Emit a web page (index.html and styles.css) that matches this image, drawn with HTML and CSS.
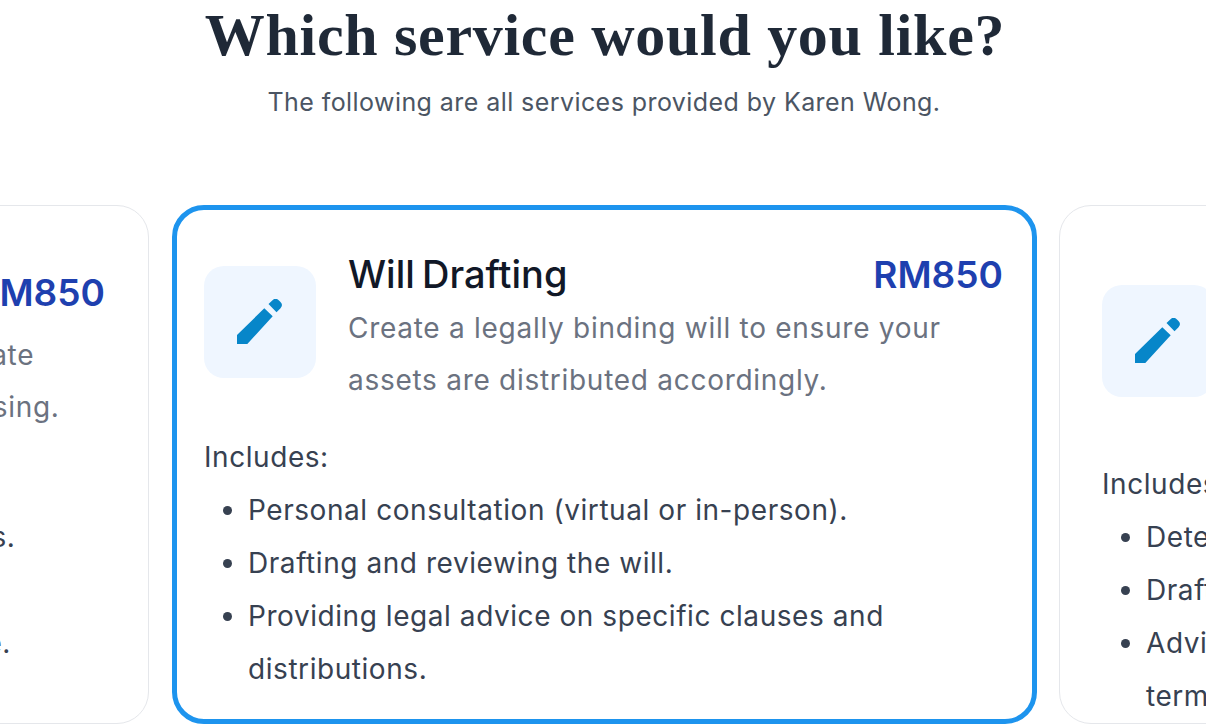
FILE: index.html
```html
<!DOCTYPE html>
<html>
<head>
    <title>Services</title>
    <link rel="stylesheet" href="styles.css">
</head>
<body>
    <div class="page">
        <h1 class="pageTitle">Which service would you like?</h1>
        <p class="pageSub">The following are all services provided by Karen Wong.</p>
        <div class="cardRow">
            <div class="card leftCard">
                <div class="cardHead">
                    <div class="iconBox"><svg class="pencil" viewBox="0 0 46 46"><path d="M0 36L27.3 9.3L35.7 17.3L10.3 45H0ZM31.5 5L35.5 1.2a4.5 4.5 0 0 1 6.2 0L43.5 3a4.5 4.5 0 0 1 0 6.2L39.5 13.3Z"/></svg></div>
                    <div class="headText">
                        <div class="titleRow">
                            <div class="cardTitle">Property Transfer Advice and Documents Review</div>
                            <div class="price">RM850</div>
                        </div>
                        <p class="cardDesc">Get sharp advice on transferring real estate<br>and property ownership, with usual licensing.</p>
                    </div>
                </div>
                <div class="includes">Includes:</div>
                <ul class="includeList">
                    <li>Reviewing the title and other property documents.</li>
                    <li>Drafting the transfer.</li>
                    <li>Submitting all the forms to the correct land office.</li>
                </ul>
            </div>
            <div class="card selected">
                <div class="cardHead">
                    <div class="iconBox"><svg class="pencil" viewBox="0 0 46 46"><path d="M0 36L27.3 9.3L35.7 17.3L10.3 45H0ZM31.5 5L35.5 1.2a4.5 4.5 0 0 1 6.2 0L43.5 3a4.5 4.5 0 0 1 0 6.2L39.5 13.3Z"/></svg></div>
                    <div class="headText">
                        <div class="titleRow">
                            <div class="cardTitle">Will Drafting</div>
                            <div class="price">RM850</div>
                        </div>
                        <p class="cardDesc">Create a legally binding will to ensure your assets are distributed accordingly.</p>
                    </div>
                </div>
                <div class="includes">Includes:</div>
                <ul class="includeList">
                    <li>Personal consultation (virtual or in-person).</li>
                    <li>Drafting and reviewing the will.</li>
                    <li>Providing legal advice on specific clauses and distributions.</li>
                </ul>
            </div>
            <div class="card rightCard">
                <div class="cardHead">
                    <div class="iconBox"><svg class="pencil" viewBox="0 0 46 46"><path d="M0 36L27.3 9.3L35.7 17.3L10.3 45H0ZM31.5 5L35.5 1.2a4.5 4.5 0 0 1 6.2 0L43.5 3a4.5 4.5 0 0 1 0 6.2L39.5 13.3Z"/></svg></div>
                    <div class="headText">
                        <div class="titleRow">
                            <div class="cardTitle">Trust Deed Setup and Registration Service</div>
                            <div class="price">RM850</div>
                        </div>
                        <p class="cardDesc">Set up a trust to protect your assets and provide for your family in the future.</p>
                    </div>
                </div>
                <div class="includes">Includes:</div>
                <ul class="includeList">
                    <li>Determining the trust structure.</li>
                    <li>Drafting the trust deed.</li>
                    <li>Advising the appointed trustees on their duties and the terms of the deed.</li>
                </ul>
            </div>
        </div>
    </div>
</body>
</html>
```

FILE: styles.css
```css
html,body{
    margin: 0;
    padding: 0;
    background-color: white;
    overflow: hidden;
}
.page{
    height: 725px;
    overflow: hidden;
    font-family: "Inter", sans-serif;
}
.pageTitle{
    margin: 0;
    padding-left: 4px;
    font-family: "Liberation Serif", serif;
    font-size: 60px;
    line-height: 70px;
    font-weight: 700;
    letter-spacing: 0.7px;
    text-align: center;
    color: #1f2937;
}
.pageSub{
    margin: 14px 0 0 0;
    padding-left: 2px;
    font-size: 25px;
    line-height: 36px;
    letter-spacing: 0.43px;
    text-align: center;
    color: #4b5563;
}
.cardRow{
    display: flex;
    justify-content: center;
    gap: 22px;
    margin-top: 85px;
}
.card{
    flex: none;
    box-sizing: border-box;
    height: 519px;
    padding: 42px;
    background-color: white;
    border: 1px solid #e5e7eb;
    border-radius: 32px;
}
.leftCard{
    width: 909px;
    margin-right: 1px;
    padding-right: 43px;
}
.rightCard{
    width: 907px;
}
.card.selected{
    width: 865px;
    padding: 28px 29px 24px 27px;
    border: 5px solid #1d94ee;
}
.cardHead{
    display: flex;
    align-items: center;
    gap: 32px;
}
.iconBox{
    flex: none;
    width: 112px;
    height: 112px;
    display: flex;
    align-items: center;
    justify-content: center;
    background-color: #eff6ff;
    border-radius: 20px;
}
.pencil{
    width: 46px;
    height: 46px;
    fill: #0786c9;
}
.headText{
    flex: 1;
    min-width: 0;
}
.titleRow{
    display: flex;
    justify-content: space-between;
    align-items: center;
    gap: 24px;
    box-sizing: border-box;
    min-height: 64px;
    padding-top: 8px;
}
.cardTitle{
    font-size: 38px;
    line-height: 36.5px;
    font-weight: 500;
    word-spacing: -3px;
    color: #111827;
}
.price{
    flex: none;
    font-size: 37px;
    line-height: 41px;
    font-weight: 600;
    color: #1e40af;
}
.cardDesc{
    margin: 0;
    font-size: 28px;
    line-height: 52px;
    letter-spacing: 0.72px;
    color: #6b7280;
}
.includes{
    margin-top: 26px;
    font-size: 28px;
    line-height: 51.5px;
    letter-spacing: 0.56px;
    color: #374151;
}
.includeList{
    margin: 0;
    padding-left: 44px;
    font-size: 28px;
    line-height: 53px;
    letter-spacing: 0.56px;
    color: #374151;
}
```
